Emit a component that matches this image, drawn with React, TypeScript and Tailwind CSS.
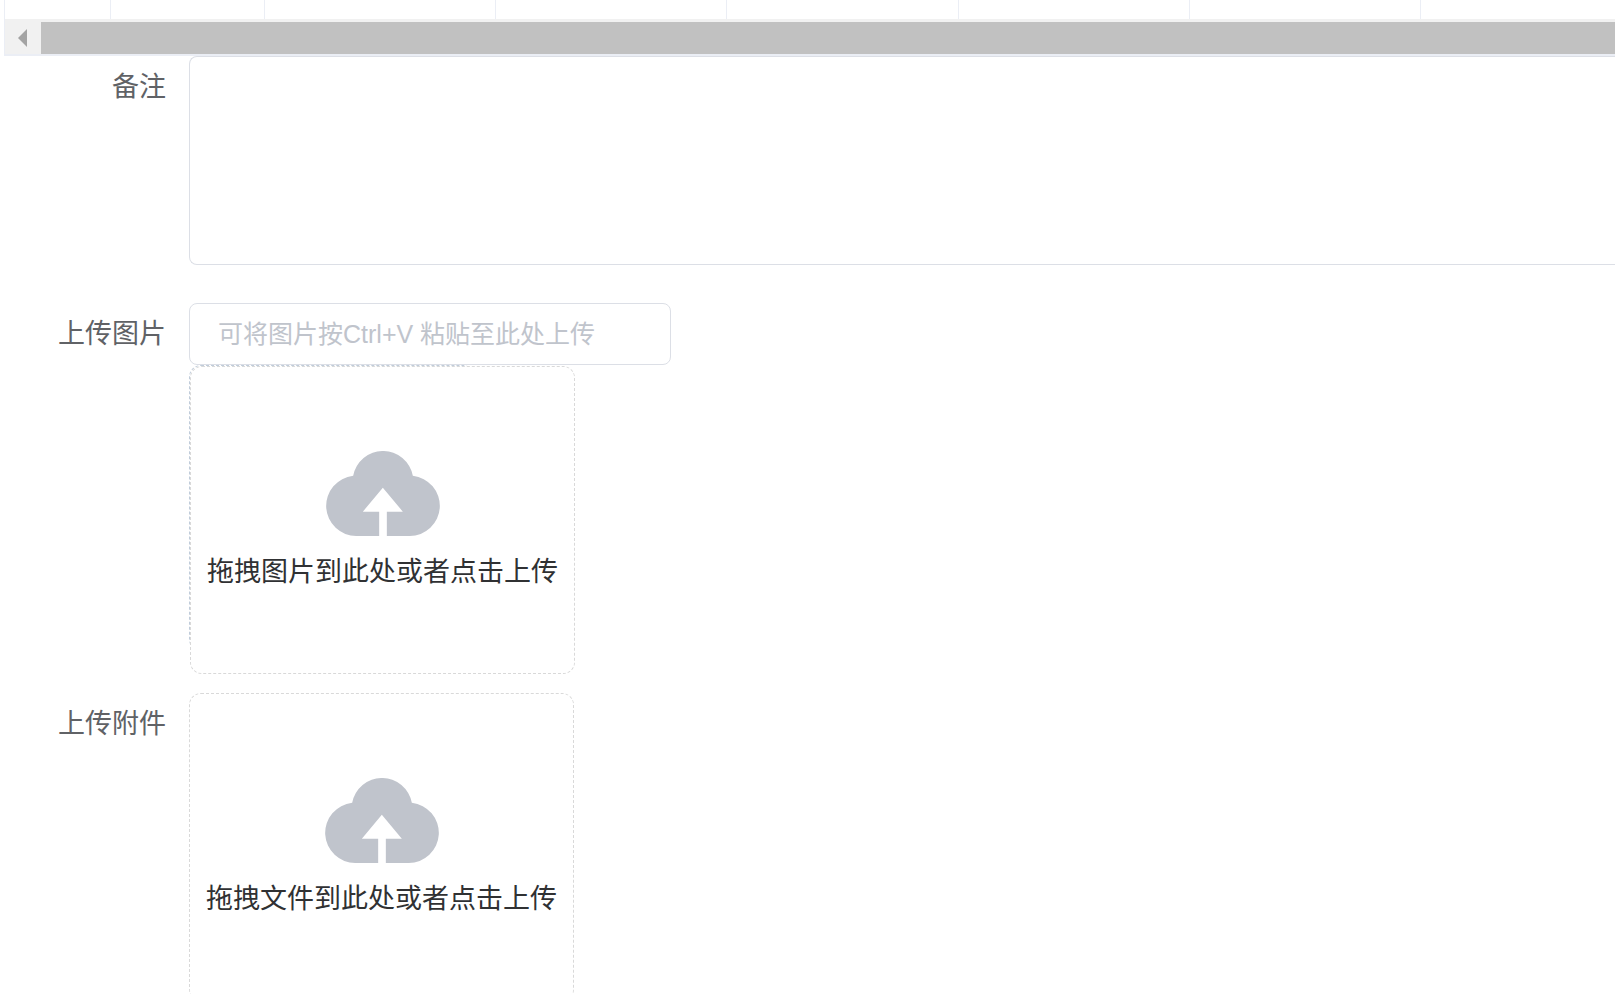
import type { ReactNode } from "react";

const columns = [
  "w-[105px]",
  "w-[154px]",
  "w-[231px]",
  "w-[231px]",
  "w-[232px]",
  "w-[231px]",
  "w-[231px]",
  "w-[231px]",
];

function CloudUpload() {
  return (
    <svg viewBox="0 0 341 255" className="h-[85px] w-[114px] fill-[#c0c4cc]" aria-hidden="true">
      <path d="M91 255A90.5 90.5 0 0 1 81 74.5A91 91 0 0 1 260 74.5A90.5 90.5 0 0 1 250 255H182V182H230L170 110L110 182H159V255Z" />
    </svg>
  );
}

function DropZone({ id, text }: { id: string; text: string }) {
  return (
    <button
      id={id}
      type="button"
      className="flex h-[308px] w-[385px] shrink-0 cursor-pointer flex-col items-center rounded-xl border border-dashed border-[#d9d9d9] bg-white pt-[84px]"
    >
      <CloudUpload />
      <span className="mt-4 text-[27px] leading-10 whitespace-nowrap text-[#303133]">{text}</span>
    </button>
  );
}

function FormRow({ label, htmlFor, children }: { label: string; htmlFor: string; children: ReactNode }) {
  return (
    <div className="flex items-start">
      <label
        htmlFor={htmlFor}
        className="w-[189px] shrink-0 pr-[23px] text-right text-[27px] leading-[62px] text-[#606266]"
      >
        {label}
      </label>
      <div className="min-w-0 flex-1">{children}</div>
    </div>
  );
}

export default function App() {
  return (
    <main className="h-screen overflow-hidden bg-white font-['Liberation_Sans','Noto_Sans_CJK_SC',sans-serif]">
      <section className="ml-1 overflow-hidden border-b-2 border-l border-[#ebeef5]">
        <table className="w-full table-fixed border-collapse">
          <tbody>
            <tr className="h-[19px]">
              {columns.map((width, i) => (
                <td key={i} className={`${width} border-r border-[#ebeef5] p-0`} />
              ))}
            </tr>
          </tbody>
        </table>
        <div className="flex h-[35px] bg-[#f1f1f1] pt-[3px]">
          <button type="button" aria-label="向左滚动" className="flex w-9 shrink-0 items-center pl-[13px]">
            <svg viewBox="0 0 9 18" className="h-[18px] w-[9px] fill-[#a3a3a3]" aria-hidden="true">
              <path d="M9 0V18L0 9Z" />
            </svg>
          </button>
          <div className="flex-1 bg-[#c1c1c1]" />
        </div>
      </section>

      <form>
        <div className="mb-[38px]">
          <FormRow label="备注" htmlFor="remark">
            <textarea
              id="remark"
              className="block h-[209px] w-full resize-none rounded-l-lg border border-r-0 border-[#dcdfe6] bg-white px-7 py-2 text-[25px] text-[#606266] outline-none"
            />
          </FormRow>
        </div>

        <div className="mb-[19px]">
          <FormRow label="上传图片" htmlFor="paste-image">
            <input
              id="paste-image"
              type="text"
              placeholder="可将图片按Ctrl+V 粘贴至此处上传"
              className="block h-[62px] w-[482px] rounded-lg border border-[#dcdfe6] bg-white px-7 text-[25px] text-[#606266] outline-none placeholder:text-[#c0c4cc]"
            />
            <div className="h-[309px]">
              <div className="h-[286px] w-[286px] rounded-xl border border-dashed border-[#c0ccda]">
                <DropZone id="image-drop" text="拖拽图片到此处或者点击上传" />
              </div>
            </div>
          </FormRow>
        </div>

        <FormRow label="上传附件" htmlFor="file-drop">
          <DropZone id="file-drop" text="拖拽文件到此处或者点击上传" />
        </FormRow>
      </form>
    </main>
  );
}
